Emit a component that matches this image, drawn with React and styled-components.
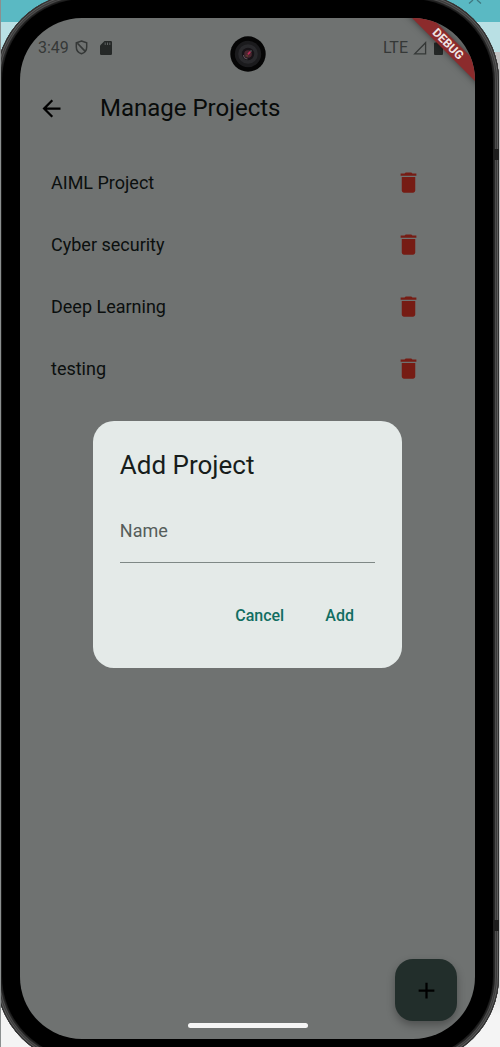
import React from 'react';
import styled, { createGlobalStyle } from 'styled-components';
import { MdAdd, MdArrowBack, MdDelete } from 'react-icons/md';

const GlobalStyle = createGlobalStyle`
  *, *::before, *::after { box-sizing: border-box; }
  body { margin: 0; font-family: Roboto, 'Liberation Sans', sans-serif; }
  h1, h2, p, ul { margin: 0; padding: 0; font-weight: 400; }
  button, input { font: inherit; border: 0; padding: 0; background: none; }
  button { cursor: pointer; }
`;

const Desktop = styled.div`
  position: relative;
  min-height: 100vh;
  overflow: hidden;
  border-left: 1px solid #8b8f8f;
  background: linear-gradient(#5ab9c3 22px, #b9e0e4 22px, #b9e0e4 52px, #c4c4c4 52px, #c4c4c4 90%, #f4f4f4 97%);
`;

const Backdrop = styled.svg`
  position: absolute;
  top: 0;
  right: 18px;
`;

const Phone = styled.div`
  position: relative;
  margin: -7px 1px -17px -5px;
  padding: 6px;
  border-radius: 88px;
  background: #1c1c1c;
  box-shadow: inset 0 0 0 1px #2e2e2e, inset 0 0 0 2px #5c5c5c, inset 0 0 0 3px #3a3a3a, inset 0 0 0 4px #4c4c4c, inset 0 0 0 5px #262626;
`;

const Bezel = styled.div`
  position: relative;
  padding: 19px 18px;
  border-radius: 82px;
  background: #000000;
`;

const Antenna = styled.span`
  position: absolute;
  right: 0;
  top: ${(p) => p.$top};
  width: 6px;
  height: 11px;
  background: #1d1d1d;
`;

const Screen = styled.div`
  position: relative;
  display: flex;
  flex-direction: column;
  min-height: calc(100vh - 26px);
  overflow: hidden;
  border-radius: 62px;
  background: #6f7271;
`;

const StatusBar = styled.div`
  display: flex;
  align-items: center;
  justify-content: space-between;
  height: 59px;
  padding: 0 32px 0 18px;
  color: #353837;
  font-size: 16px;
  line-height: 20px;
`;

const StatusGroup = styled.div`
  display: flex;
  align-items: center;
  gap: ${(p) => p.$gap};
`;

const Camera = styled.svg`
  position: absolute;
  top: 18px;
  left: calc(50% - 18px);
`;

const AppBar = styled.header`
  display: flex;
  align-items: center;
  gap: 18px;
  height: 62px;
`;

const IconButton = styled.button`
  display: flex;
  align-items: center;
  justify-content: center;
  width: ${(p) => p.$width};
  height: 53px;
  font-size: 27px;
  color: ${(p) => p.$color};
`;

const PageTitle = styled.h1`
  font-size: 24px;
  line-height: 31px;
  color: #080b0a;
`;

const ProjectList = styled.ul`
  padding-top: 12px;
  list-style: none;
`;

const ProjectRow = styled.li`
  display: flex;
  align-items: center;
  justify-content: space-between;
  height: 62px;
  padding: 0 40px 0 31px;
  font-size: 18px;
  line-height: 27px;
  color: #0b0f0e;
`;

const Overlay = styled.div`
  position: absolute;
  inset: 0;
  display: flex;
  align-items: center;
  justify-content: center;
  padding-top: 32px;
`;

const Dialog = styled.form`
  width: 68%;
  padding: 27px 27px 26px;
  border-radius: 21px;
  background: #e4eae8;
`;

const DialogTitle = styled.h2`
  font-size: 26px;
  line-height: 35px;
  color: #171d1b;
`;

const Field = styled.div`
  position: relative;
  margin-top: 18px;
`;

const FieldLabel = styled.label`
  position: absolute;
  top: 16px;
  left: 0;
  font-size: 18px;
  line-height: 27px;
  color: #555d5a;
  pointer-events: none;
`;

const FieldInput = styled.input`
  display: block;
  width: 100%;
  height: 62px;
  border-bottom: 1px solid #7f8886;
  border-radius: 0;
  outline: none;
  font-size: 18px;
  color: #171d1b;
`;

const Actions = styled.div`
  display: flex;
  justify-content: flex-end;
  gap: 9px;
  margin-top: 26px;
`;

const TextButton = styled.button`
  min-width: 71px;
  height: 53px;
  padding: 0 11px;
  font-size: 16px;
  font-weight: 500;
  line-height: 22px;
  color: #116e62;
`;

const Fab = styled.button`
  position: absolute;
  right: 18px;
  bottom: 18px;
  display: flex;
  align-items: center;
  justify-content: center;
  width: 62px;
  height: 62px;
  border-radius: 18px;
  background: #222e2b;
  box-shadow: 0 4px 8px rgba(0, 0, 0, 0.3);
  color: #000000;
  font-size: 27px;
`;

const HomeIndicator = styled.span`
  position: absolute;
  bottom: 11px;
  left: 50%;
  width: 120px;
  height: 5px;
  margin-left: -60px;
  border-radius: 3px;
  background: #f5f5f5;
`;

const DebugBanner = styled.div`
  position: absolute;
  top: 19px;
  right: -33px;
  width: 120px;
  height: 14px;
  background: #8c2b2c;
  box-shadow: 0 0 7px rgba(0, 0, 0, 0.5);
  color: #f0e6e6;
  font-size: 12px;
  font-weight: 700;
  line-height: 14px;
  text-align: center;
  transform: rotate(45deg);
`;

const projects = ['AIML Project', 'Cyber security', 'Deep Learning', 'testing'];

function ShieldIcon() {
  return (
    <svg width="13" height="15" viewBox="0 0 14 16" fill="none" stroke="#353837" strokeWidth="1.6" aria-hidden="true">
      <path d="M7 1L12.6 3V7.4C12.6 11 10.2 13.7 7 14.8C3.8 13.7 1.4 11 1.4 7.4V3Z" />
      <path d="M2.6 3.4L11 12.2" strokeWidth="1.8" />
    </svg>
  );
}

function SdCardIcon() {
  return (
    <svg width="12" height="14" viewBox="0 0 12 14" aria-hidden="true">
      <path fill="#252827" d="M4.5 0H10.8Q12 0 12 1.2V12.8Q12 14 10.8 14H1.2Q0 14 0 12.8V4.5Z" />
      <path stroke="#6f7271" strokeWidth="0.8" d="M5.2 1.5V4M7.5 1.5V4M9.8 1.5V4" />
    </svg>
  );
}

function SignalIcon() {
  return (
    <svg width="14" height="14" viewBox="0 0 14 14" fill="none" stroke="#353837" strokeWidth="1.3" aria-hidden="true">
      <path d="M1.7 12.9H12.6V1.7Z" />
    </svg>
  );
}

function BatteryIcon() {
  return (
    <svg width="9" height="14" viewBox="0 0 9 14" aria-hidden="true">
      <path fill="#252827" d="M2.5 0H6.5V1.4H8Q9 1.4 9 2.4V13Q9 14 8 14H1Q0 14 0 13V2.4Q0 1.4 1 1.4H2.5Z" />
    </svg>
  );
}

function CameraLens() {
  return (
    <Camera width="36" height="36" viewBox="0 0 36 36" aria-hidden="true">
      <circle cx="18" cy="18" r="17.7" fill="#050505" />
      <circle cx="18" cy="18" r="13.2" fill="#1b1b1d" />
      <circle cx="18" cy="18" r="9.8" fill="#29292c" />
      <circle cx="18" cy="18" r="6.2" fill="#171317" />
      <path d="M13.5 19a4.6 4.6 0 0 0 4 4" fill="none" stroke="#5a5057" strokeWidth="1.2" />
      <circle cx="18" cy="18" r="3.8" fill="#4a2730" />
      <path d="M16.4 19.2l1.4 1.2" stroke="#60452c" strokeWidth="1.4" />
      <path d="M18.4 17.8l1.4-1.6" stroke="#c42b5a" strokeWidth="1.7" strokeLinecap="round" />
      <circle cx="21" cy="15" r="0.8" fill="#6a646b" />
    </Camera>
  );
}

export default function App() {
  return (
    <Desktop>
      <GlobalStyle />
      <Backdrop width="14" height="4" viewBox="0 0 14 4" fill="none" stroke="#3f7880" strokeWidth="1.3" aria-hidden="true">
        <path d="M1 3.5L5 0M13 3.5L9 0" />
      </Backdrop>
      <Phone>
        <Antenna $top="156px" />
        <Antenna $top="927px" />
        <Bezel>
          <Screen>
            <StatusBar>
              <StatusGroup $gap="6px">
                <span>3:49</span>
                <StatusGroup $gap="12px">
                  <ShieldIcon />
                  <SdCardIcon />
                </StatusGroup>
              </StatusGroup>
              <StatusGroup $gap="5px">
                <span>LTE</span>
                <StatusGroup $gap="7px">
                  <SignalIcon />
                  <BatteryIcon />
                </StatusGroup>
              </StatusGroup>
            </StatusBar>
            <CameraLens />
            <AppBar>
              <IconButton type="button" aria-label="Back" $width="62px" $color="#000000">
                <MdArrowBack />
              </IconButton>
              <PageTitle>Manage Projects</PageTitle>
            </AppBar>
            <ProjectList>
              {projects.map((name) => (
                <ProjectRow key={name}>
                  <span>{name}</span>
                  <IconButton type="button" aria-label={`Delete ${name}`} $width="53px" $color="#761c14">
                    <MdDelete />
                  </IconButton>
                </ProjectRow>
              ))}
            </ProjectList>
            <Fab type="button" aria-label="Add project">
              <MdAdd />
            </Fab>
            <Overlay>
              <Dialog role="dialog" aria-labelledby="dialog-title" onSubmit={(e) => e.preventDefault()}>
                <DialogTitle id="dialog-title">Add Project</DialogTitle>
                <Field>
                  <FieldLabel htmlFor="project-name">Name</FieldLabel>
                  <FieldInput id="project-name" type="text" />
                </Field>
                <Actions>
                  <TextButton type="button">Cancel</TextButton>
                  <TextButton type="submit">Add</TextButton>
                </Actions>
              </Dialog>
            </Overlay>
            <HomeIndicator />
            <DebugBanner>DEBUG</DebugBanner>
          </Screen>
        </Bezel>
      </Phone>
    </Desktop>
  );
}
